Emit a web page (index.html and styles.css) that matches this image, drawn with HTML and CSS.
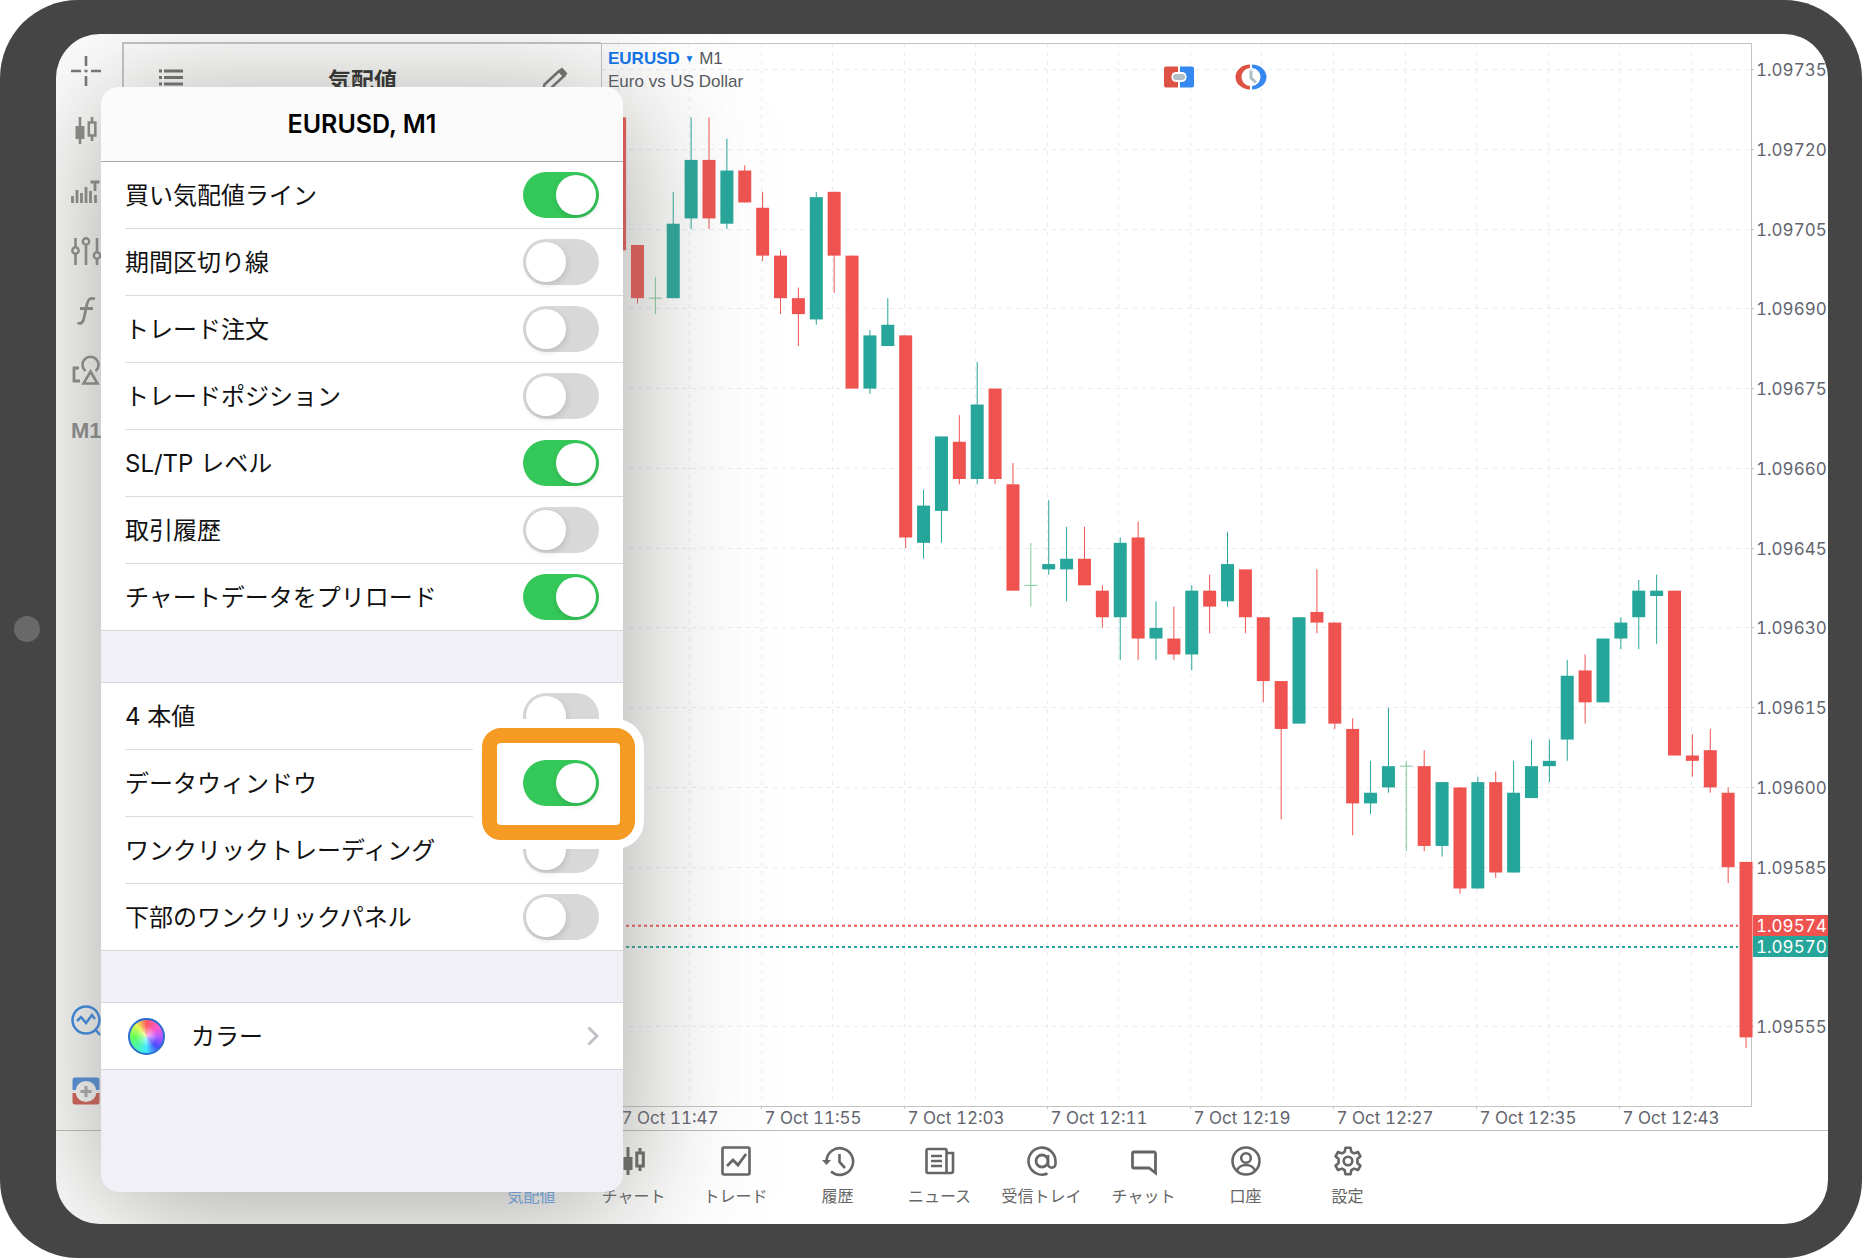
FILE: index.html
```html
<!DOCTYPE html>
<html lang="ja">
<head>
<meta charset="utf-8">
<meta name="viewport" content="width=device-width, initial-scale=1">
<title>EURUSD, M1</title>
<link rel="stylesheet" href="styles.css">
</head>
<body>
<div class="device">
  <div class="screen">
    <main class="workspace">
      <nav class="tools" aria-label="チャートツール">
        <button class="tool" aria-label="十字カーソル"><svg class="icon" viewBox="0 0 30 30"><path d="M15 0v10M15 20v10M0 15h10M20 15h10M13.500 15h3" stroke-width="2.600"/></svg></button>
        <button class="tool" aria-label="ローソク足"><svg class="icon" viewBox="0 0 30 30"><path d="M9 1v27M21 1v5M21 20v5" stroke-width="2.600"/><path class="solid" d="M4.500 10h9v13h-9z"/><path d="M17.800 6.500h6.500v13h-6.500z" stroke-width="2.600"/></svg></button>
        <button class="tool" aria-label="ティックチャート"><svg class="icon" viewBox="0 0 30 30"><path d="M1.500 20v7M6 14v13M10.500 17v10M15 11v16M19.500 15v12M24.500 19v8" stroke-width="2.800"/><path d="M19.500 6h9M24 6v9" stroke-width="2.800"/></svg></button>
        <button class="tool" aria-label="設定スライダー"><svg class="icon" viewBox="0 0 30 30"><path d="M4.500 2v9M4.500 18v11M15 10v19M26 2v14M26 23v6" stroke-width="2.600"/><circle cx="4.500" cy="14.500" r="3.200" stroke-width="2.400"/><circle cx="15" cy="5.500" r="3.200" stroke-width="2.400"/><circle cx="26" cy="19.500" r="3.200" stroke-width="2.400"/></svg></button>
        <button class="tool" aria-label="インディケータ"><svg class="icon" viewBox="0 0 30 30"><path d="M24 3c-5-2-7 1-8 5l-3 14c-1 5-3 6-6.500 5M9 12.500h13" stroke-width="2.800"/></svg></button>
        <button class="tool" aria-label="オブジェクト"><svg class="icon" viewBox="0 0 30 30"><path d="M8 12H3v13h6" stroke-width="2.800"/><path d="M14.500 15a8 8 0 1 1 10 0" stroke-width="2.600"/><path d="M19.500 15.500l7 12h-14z" stroke-width="2.600"/></svg></button>
        <button class="tool tool-period">M1</button>
        <button class="tool tool-first-low" aria-label="分析"><svg class="icon icon-blue" viewBox="0 0 30 30"><circle cx="15" cy="15" r="13.500" stroke-width="2.500"/><path d="M6 16l4-4 5 6 6-8 3 4M24 24l5 6" stroke-width="2.500"/></svg></button>
        <button class="tool" aria-label="新規注文"><svg class="icon" viewBox="0 0 30 30"><path fill="#4a8ce0" stroke="none" d="M4 1.500h22a2.500 2.500 0 0 1 2.500 2.500v10H1.500V4A2.500 2.500 0 0 1 4 1.500z"/><path fill="#d3574b" stroke="none" d="M1.500 17h27v9a2.500 2.500 0 0 1-2.500 2.500H4A2.500 2.500 0 0 1 1.500 26z"/><circle cx="15" cy="15.500" r="10.500" fill="#fff" stroke="none"/><path d="M15 10v11M9.500 15.500h11" stroke="#a5a8ae" stroke-width="3"/></svg></button>
      </nav>

      <section class="quotes" aria-label="気配値">
        <header class="quotes-head">
          <button class="plain" aria-label="リスト"><svg class="icon" viewBox="0 0 30 30"><path d="M3 5h3M3 11.500h3M3 18h3M3 24.500h3M8 5h19M8 11.500h19M8 18h19M8 24.500h19" stroke-width="3"/></svg></button>
          <h2>気配値</h2>
          <button class="plain" aria-label="編集"><svg class="icon" viewBox="0 0 30 30"><path d="M3.500 26.500l2-8L20 5l5 5L10 24z" stroke-width="2.600"/><path class="solid" d="M20 4l3-2.500 5.500 6L25.500 11z"/></svg></button>
        </header>
      </section>

      <section class="chart" aria-label="チャート">
        <svg id="plot" class="plot" viewBox="0 0 1227 1096" role="img" aria-label="EURUSD M1 ローソク足チャート"></svg>
        <div class="chart-title">
          <div><button class="symbol">EURUSD <span class="caret">▼</span></button> M1</div>
          <div>Euro vs US Dollar</div>
        </div>
        <div class="quick">
          <button class="plain" aria-label="ワンクリック"><svg class="quick-icon" viewBox="0 0 32 32"><path fill="#dd5245" d="M3 5.500h12v21H3a2 2 0 0 1-2-2v-17a2 2 0 0 1 2-2z"/><path fill="#3588f0" d="M17 5.500h12a2 2 0 0 1 2 2v17a2 2 0 0 1-2 2H17z"/><rect x="8.500" y="11" width="15" height="10" rx="4.500" fill="#fff"/><rect x="10" y="13" width="12" height="6" rx="3" fill="#b0bec5"/></svg></button>
          <button class="plain" aria-label="時間"><svg class="quick-icon" viewBox="0 0 32 32" fill="none"><path fill="#dd5245" d="M15 3.500A14.500 12.500 0 0 0 15 28.500v-3.500a8.500 9 0 0 1 0-18z"/><path fill="#3588f0" d="M17 3.500A14.500 12.500 0 0 1 17 28.500v-3.500a8.500 9 0 0 0 0-18z"/><path stroke="#b0bec5" stroke-width="3" d="M16 9.500v7.500l5 4.500"/></svg></button>
        </div>
      </section>
    </main>

    <nav class="tabs" aria-label="メイン">
      <a class="tab tab-active" href="#quotes"><svg class="icon" viewBox="0 0 30 30"><path d="M8 26V4M3 9l5-5 5 5M22 4v22M17 21l5 5 5-5" stroke-width="2.600"/></svg>気配値</a>
      <a class="tab" href="#chart"><svg class="icon" viewBox="0 0 30 30"><path d="M9 1v28M21 2v5M21 20v5" stroke-width="3"/><path class="solid" d="M4.500 11h9v13h-9z"/><path d="M17.800 7h6.500v13h-6.500z" stroke-width="3"/></svg>チャート</a>
      <a class="tab" href="#trade"><svg class="icon" viewBox="0 0 30 30"><rect x="1.500" y="1.500" width="27" height="27" rx="1.500" stroke-width="2.600"/><path d="M6 20l6-6 5 5 8-11" stroke-width="2.800"/></svg>トレード</a>
      <a class="tab" href="#history"><svg class="icon" viewBox="0 0 30 30"><path d="M3.500 15A13.300 13.300 0 1 1 8 25.500" stroke-width="2.600"/><path class="solid" d="M-1 14h9l-4.500 5z"/><path d="M16.500 8v8l5.500 6" stroke-width="2.600"/></svg>履歴</a>
      <a class="tab" href="#news"><svg class="icon" viewBox="0 0 30 30"><rect x="1.500" y="3" width="20" height="24" rx="1.500" stroke-width="2.600"/><path d="M22 7h6v18a2 2 0 0 1-2 2h-6M6 10h11M6 15h11M6 20h11" stroke-width="2.600"/></svg>ニュース</a>
      <a class="tab" href="#mail"><svg class="icon" viewBox="0 0 30 30"><circle cx="15" cy="15" r="6" stroke-width="2.800"/><path d="M21 9v9a3.700 3.700 0 0 0 7.500 0v-3A13.500 13.500 0 1 0 20.500 27.500" stroke-width="2.600"/></svg>受信トレイ</a>
      <a class="tab" href="#chat"><svg class="icon" viewBox="0 0 30 30"><path d="M5 6h20a1.500 1.500 0 0 1 1.500 1.500V27l-6.500-5H5a1.500 1.500 0 0 1-1.500-1.500v-13A1.500 1.500 0 0 1 5 6z" stroke-width="2.800"/></svg>チャット</a>
      <a class="tab" href="#account"><svg class="icon" viewBox="0 0 30 30"><circle cx="15" cy="15" r="13.500" stroke-width="2.600"/><circle cx="15" cy="12" r="4.800" stroke-width="2.600"/><path d="M6 25c2-8 16-8 18 0" stroke-width="2.600"/></svg>口座</a>
      <a class="tab" href="#settings"><svg class="icon" viewBox="0 0 30 30"><circle cx="15" cy="15" r="4.300" stroke-width="2.600"/><path stroke-width="2.600" stroke-linejoin="round" d="M12.500 1.800h5l.8 4 2.800 1.600 3.900-1.400 2.500 4.300-3.100 2.700v4l3.100 2.700-2.500 4.300-3.900-1.400-2.800 1.600-.8 4h-5l-.8-4-2.800-1.600L5 24l-2.500-4.300L5.600 17v-4l-3.100-2.700L5 6l3.900 1.400 2.800-1.600z"/></svg>設定</a>
    </nav>

    <section class="popover" aria-labelledby="popover-title">
      <header class="popover-head"><h1 id="popover-title">EURUSD, M1</h1></header>
      <ul class="group">
        <li><label for="s-ask">買い気配値ライン</label><input class="switch" type="checkbox" id="s-ask" checked></li>
        <li><label for="s-period">期間区切り線</label><input class="switch" type="checkbox" id="s-period"></li>
        <li><label for="s-orders">トレード注文</label><input class="switch" type="checkbox" id="s-orders"></li>
        <li><label for="s-positions">トレードポジション</label><input class="switch" type="checkbox" id="s-positions"></li>
        <li><label for="s-sltp">SL/TP レベル</label><input class="switch" type="checkbox" id="s-sltp" checked></li>
        <li><label for="s-history">取引履歴</label><input class="switch" type="checkbox" id="s-history"></li>
        <li><label for="s-preload">チャートデータをプリロード</label><input class="switch" type="checkbox" id="s-preload" checked></li>
      </ul>
      <ul class="group group-spaced">
        <li><label for="s-ohlc">4 本値</label><input class="switch" type="checkbox" id="s-ohlc"></li>
        <li class="spotlit"><label for="s-data">データウィンドウ</label><input class="switch" type="checkbox" id="s-data" checked></li>
        <li><label for="s-oneclick">ワンクリックトレーディング</label><input class="switch" type="checkbox" id="s-oneclick"></li>
        <li><label for="s-panel">下部のワンクリックパネル</label><input class="switch" type="checkbox" id="s-panel"></li>
      </ul>
      <ul class="group group-spaced">
        <li><a class="color-link" href="#colors"><span class="wheel"></span><span class="color-name">カラー</span><svg class="chevron" viewBox="0 0 12 20"><path d="M1.500 1.500L10 10l-8.500 8.500"/></svg></a></li>
      </ul>
    </section>
  </div>
</div>
<script src="chart.js"></script>
</body>
</html>
```

FILE: styles.css
```css
*, *::before, *::after { box-sizing: border-box; }

body {
  margin: 0;
  background: #fff;
  color: #111;
  font-family: Inter, "Noto Sans CJK JP", sans-serif;
}

h1, h2, ul { margin: 0; padding: 0; }
ul { list-style: none; }

button {
  padding: 0;
  border: 0;
  background: none;
  color: inherit;
  font: inherit;
}

/* Tablet body */
.device {
  position: relative;
  min-height: 100vh;
  padding: 34px 34px 34px 56px;
  border-radius: 78px;
  background: #454545;
}

.device::before {
  content: "";
  position: absolute;
  left: 14px;
  top: 50%;
  width: 26px;
  height: 26px;
  margin-top: -13px;
  border-radius: 50%;
  background: #696969;
}

.screen {
  position: relative;
  overflow: hidden;
  border-radius: 44px;
  background: #fff;
}

.workspace {
  display: grid;
  grid-template-columns: 66px 479px minmax(0, 1fr);
}

/* Drawing tools */
.icon {
  display: block;
  width: 30px;
  height: 30px;
  overflow: visible;
  fill: none;
  stroke: currentColor;
}

.icon .solid { fill: currentColor; stroke: none; }
.icon-blue { color: #2f86ec; }

.tools {
  display: flex;
  flex-direction: column;
  align-items: flex-start;
  padding: 7px 0 9px 15px;
  color: #8a8a8a;
}

.tool {
  display: flex;
  align-items: center;
  height: 60px;
}

.tool:first-child { color: #757575; }

.tool-period {
  font: 700 22px "Liberation Sans", sans-serif;
}

.tool-first-low {
  margin-top: auto;
  margin-bottom: 11px;
}

/* Quotes column */
.quotes {
  margin-top: 8px;
  border-top: 2px solid #c4c4c4;
  border-left: 2px solid #c4c4c4;
}

.quotes-head {
  display: flex;
  align-items: center;
  justify-content: space-between;
  height: 74px;
  padding: 0 32px;
  color: #6c6c6c;
}

.quotes-head h2 {
  color: #222;
  font-size: 23px;
  line-height: 32px;
  font-weight: 700;
}

.plain { display: block; }

/* Chart */
.chart { position: relative; }

.plot {
  display: block;
  width: 100%;
  height: auto;
  font-size: 17px;
  font-variant-numeric: tabular-nums;
}

.frame { fill: none; stroke: #c4c4c4; stroke-width: 1; }
.grid { stroke: #e4edf1; stroke-width: 1; stroke-dasharray: 4 5; }
.axis-text { fill: #62646e; }
.tag-text { fill: #fff; }
.up { fill: #26a69a; stroke: #26a69a; }
.down { fill: #ef5350; stroke: #ef5350; }
.flat { fill: #7fcb9b; stroke: #7fcb9b; }
.level { stroke-width: 2; stroke-dasharray: 3 3; }
.tag { stroke: none; }

.chart-title {
  position: absolute;
  top: 13px;
  left: 7px;
  color: #565860;
  font: 17px/23px "Liberation Sans", sans-serif;
}

.symbol { color: #0b74ee; font-weight: 700; }
.caret { font-size: 10px; vertical-align: 2px; }

.quick {
  position: absolute;
  top: 27px;
  left: 562px;
  display: flex;
  gap: 40px;
}

.quick-icon { display: block; width: 32px; height: 32px; }

/* Bottom tabs */
.tabs {
  display: flex;
  justify-content: center;
  height: 94px;
  padding: 15px 5px 0 0;
  border-top: 1px solid #bdbdbd;
}

.tab {
  display: flex;
  flex-direction: column;
  align-items: center;
  gap: 8px;
  width: 102px;
  color: #666;
  font-size: 16px;
  line-height: 24px;
  text-decoration: none;
  white-space: nowrap;
}

.tab-active { color: #6aa9f5; }

/* Chart settings popover */
.popover {
  position: absolute;
  top: 53px;
  left: 45px;
  width: 522px;
  padding-bottom: 122px;
  border-radius: 18px;
  background: #f0f0f6;
  box-shadow: 0 14px 130px rgba(118, 118, 112, 0.68);
  font-size: 24px;
}

.popover-head {
  display: flex;
  align-items: center;
  justify-content: center;
  height: 75px;
  border-bottom: 1px solid #a9a9ab;
  border-radius: 18px 18px 0 0;
  background: #fbfbfc;
}

.popover-head h1 {
  color: #000;
  font-size: 25px;
  line-height: 32px;
  font-weight: 600;
}

.group {
  border-bottom: 1px solid #d6d6da;
  background: #fff;
}

.group-spaced {
  margin-top: 51px;
  border-top: 1px solid #d6d6da;
}

.group li {
  position: relative;
  display: flex;
  align-items: center;
  justify-content: space-between;
  height: 67px;
  margin-left: 24px;
  padding-right: 24px;
  border-bottom: 1px solid #dcdcde;
}

.group li:last-child { height: 66px; border-bottom: 0; }

.group label, .color-name { padding-bottom: 4px; }

.switch {
  appearance: none;
  flex: none;
  width: 76px;
  height: 46px;
  margin: 0;
  padding: 3px;
  border-radius: 23px;
  background: #d8d8d8;
}

.switch::before {
  content: "";
  display: block;
  width: 40px;
  height: 40px;
  border-radius: 50%;
  background: #fff;
  box-shadow: 1px 3px 6px rgba(0, 0, 0, 0.12);
}

.switch:checked { background: #34c759; }
.switch:checked::before { margin-left: 30px; }

/* Callout frame around the data-window switch */
.spotlit { z-index: 1; }

.spotlit::after {
  content: "";
  position: absolute;
  top: -22px;
  right: -12px;
  width: 153px;
  height: 112px;
  border: 15px solid #f59b23;
  border-radius: 19px;
  background: #fff;
  box-shadow: 0 0 0 9px #fff;
}

.spotlit .switch { position: relative; z-index: 1; }

.color-link {
  display: flex;
  flex: 1;
  align-items: center;
  gap: 26px;
  padding-left: 3px;
  color: inherit;
  text-decoration: none;
}

.wheel {
  width: 37px;
  height: 37px;
  border: 2px solid #2a6fd0;
  border-radius: 50%;
  background:
    radial-gradient(circle, rgba(255, 255, 255, 0.7), rgba(255, 255, 255, 0.15) 45%),
    conic-gradient(#ff3b4a, #ff3cc8 50deg, #a93cff 90deg, #2b2bff 135deg, #1fe5ff 180deg, #2bf59a 225deg, #4dff3c 270deg, #e8f53c 320deg, #ff3b4a);
}

.chevron {
  width: 12px;
  height: 20px;
  margin-left: auto;
  fill: none;
  stroke: #c2c2c6;
  stroke-width: 3;
}
```

FILE: chart.js
```js
// Candles as [open, high, low, close], in points below 1.09735.
const candles = [
  [9,9,34,34],[33,33,44,43],[43,39,46,43],[43,23,43,29],[28,9,30,17],[17,9,30,28],[29,13,30,19],[19,18,25,25],
  [26,23,36,35],[35,34,46,43],[43,41,52,46],[47,23,48,24],[23,23,42,35],[35,35,60,60],[60,49,61,50],[52,43,52,48],
  [50,50,90,88],[89,79,92,82],[83,69,89,69],[70,65,78,77],[77,55,78,63],[60,60,78,77],[78,74,98,98],[97,89,101,97],
  [94,81,95,93],[94,86,100,92],[92,86,97,97],[98,97,105,103],[103,88,111,89],[88,85,111,107],[107,100,111,105],[107,101,111,110],
  [110,97,113,98],[98,95,106,101],[100,87,101,93],[94,94,106,103],[103,103,119,115],[115,115,141,124],[123,103,123,103],[102,94,106,104],
  [104,104,124,123],[124,122,144,138],[138,130,140,136],[135,120,136,131],[131,130,147,131],[131,128,147,146],[146,134,148,134],[135,135,155,154],
  [154,133,154,134],[134,132,152,151],[151,130,151,136],[137,126,137,131],[131,126,134,130],[126,111,130,114],[113,110,123,119],[119,107,119,107],
  [107,103,109,104],[103,96,109,98],[99,95,108,98],[98,98,129,129],[129,125,133,130],[128,124,136,135],[136,135,153,150],[149,149,184,182]
];

const TOP = 9, RIGHT = 1150, BOTTOM = 1072;
const yOf = points => 35.5 + points * 5.318;
const svg = document.getElementById('plot');

function add(name, attrs, text) {
  const el = document.createElementNS('http://www.w3.org/2000/svg', name);
  for (const key in attrs) el.setAttribute(key, attrs[key]);
  if (text) el.textContent = text;
  svg.appendChild(el);
}

function line(x1, y1, x2, y2, cls) {
  add('line', { x1, y1, x2, y2, class: cls });
}

// Grid, price scale and time scale
for (let p = 0; p <= 180; p += 15) {
  const y = Math.floor(yOf(p)) + 0.5;
  line(1, y, RIGHT, y, 'grid');
  line(RIGHT, y, RIGHT + 3, y, 'frame');
  if (p !== 165) add('text', { x: 1155, y: y + 6, class: 'axis-text' }, (1.09735 - p / 100000).toFixed(5));
}
const times = ['11:47', '11:55', '12:03', '12:11', '12:19', '12:27', '12:35', '12:43'];
for (let i = 0; i < 16; i++) {
  const x = Math.floor(17 + i * 71.55) + 0.5;
  line(x, TOP, x, BOTTOM, 'grid');
  if (i % 2 === 0) {
    line(x, BOTTOM, x, BOTTOM + 3, 'frame');
    add('text', { x: x + 3, y: 1090, class: 'axis-text' }, '7 Oct ' + times[i / 2]);
  }
}
add('rect', { x: 0.5, y: TOP + 0.5, width: RIGHT, height: BOTTOM - TOP, class: 'frame' });

// Ask and bid levels
line(1, yOf(161), 1137, yOf(161), 'level down');
line(1, yOf(165), 1137, yOf(165), 'level up');

candles.forEach(([open, high, low, close], i) => {
  const x = 18.6 + i * 17.88;
  const cls = close > open ? 'down' : close < open ? 'up' : 'flat';
  line(x, yOf(high), x, yOf(low), cls);
  if (open === close) line(x - 6.5, yOf(open), x + 6.5, yOf(open), cls);
  else add('rect', {
    x: x - 6.5, y: yOf(Math.min(open, close)), width: 13,
    height: Math.abs(close - open) * 5.318, class: cls, 'stroke-width': 0
  });
});

// Current price tags
add('rect', { x: 1152, y: 881, width: 75, height: 21, class: 'tag down' });
add('rect', { x: 1152, y: 902, width: 75, height: 21, class: 'tag up' });
add('text', { x: 1155, y: 898, class: 'tag-text' }, '1.09574');
add('text', { x: 1155, y: 919, class: 'tag-text' }, '1.09570');
```
